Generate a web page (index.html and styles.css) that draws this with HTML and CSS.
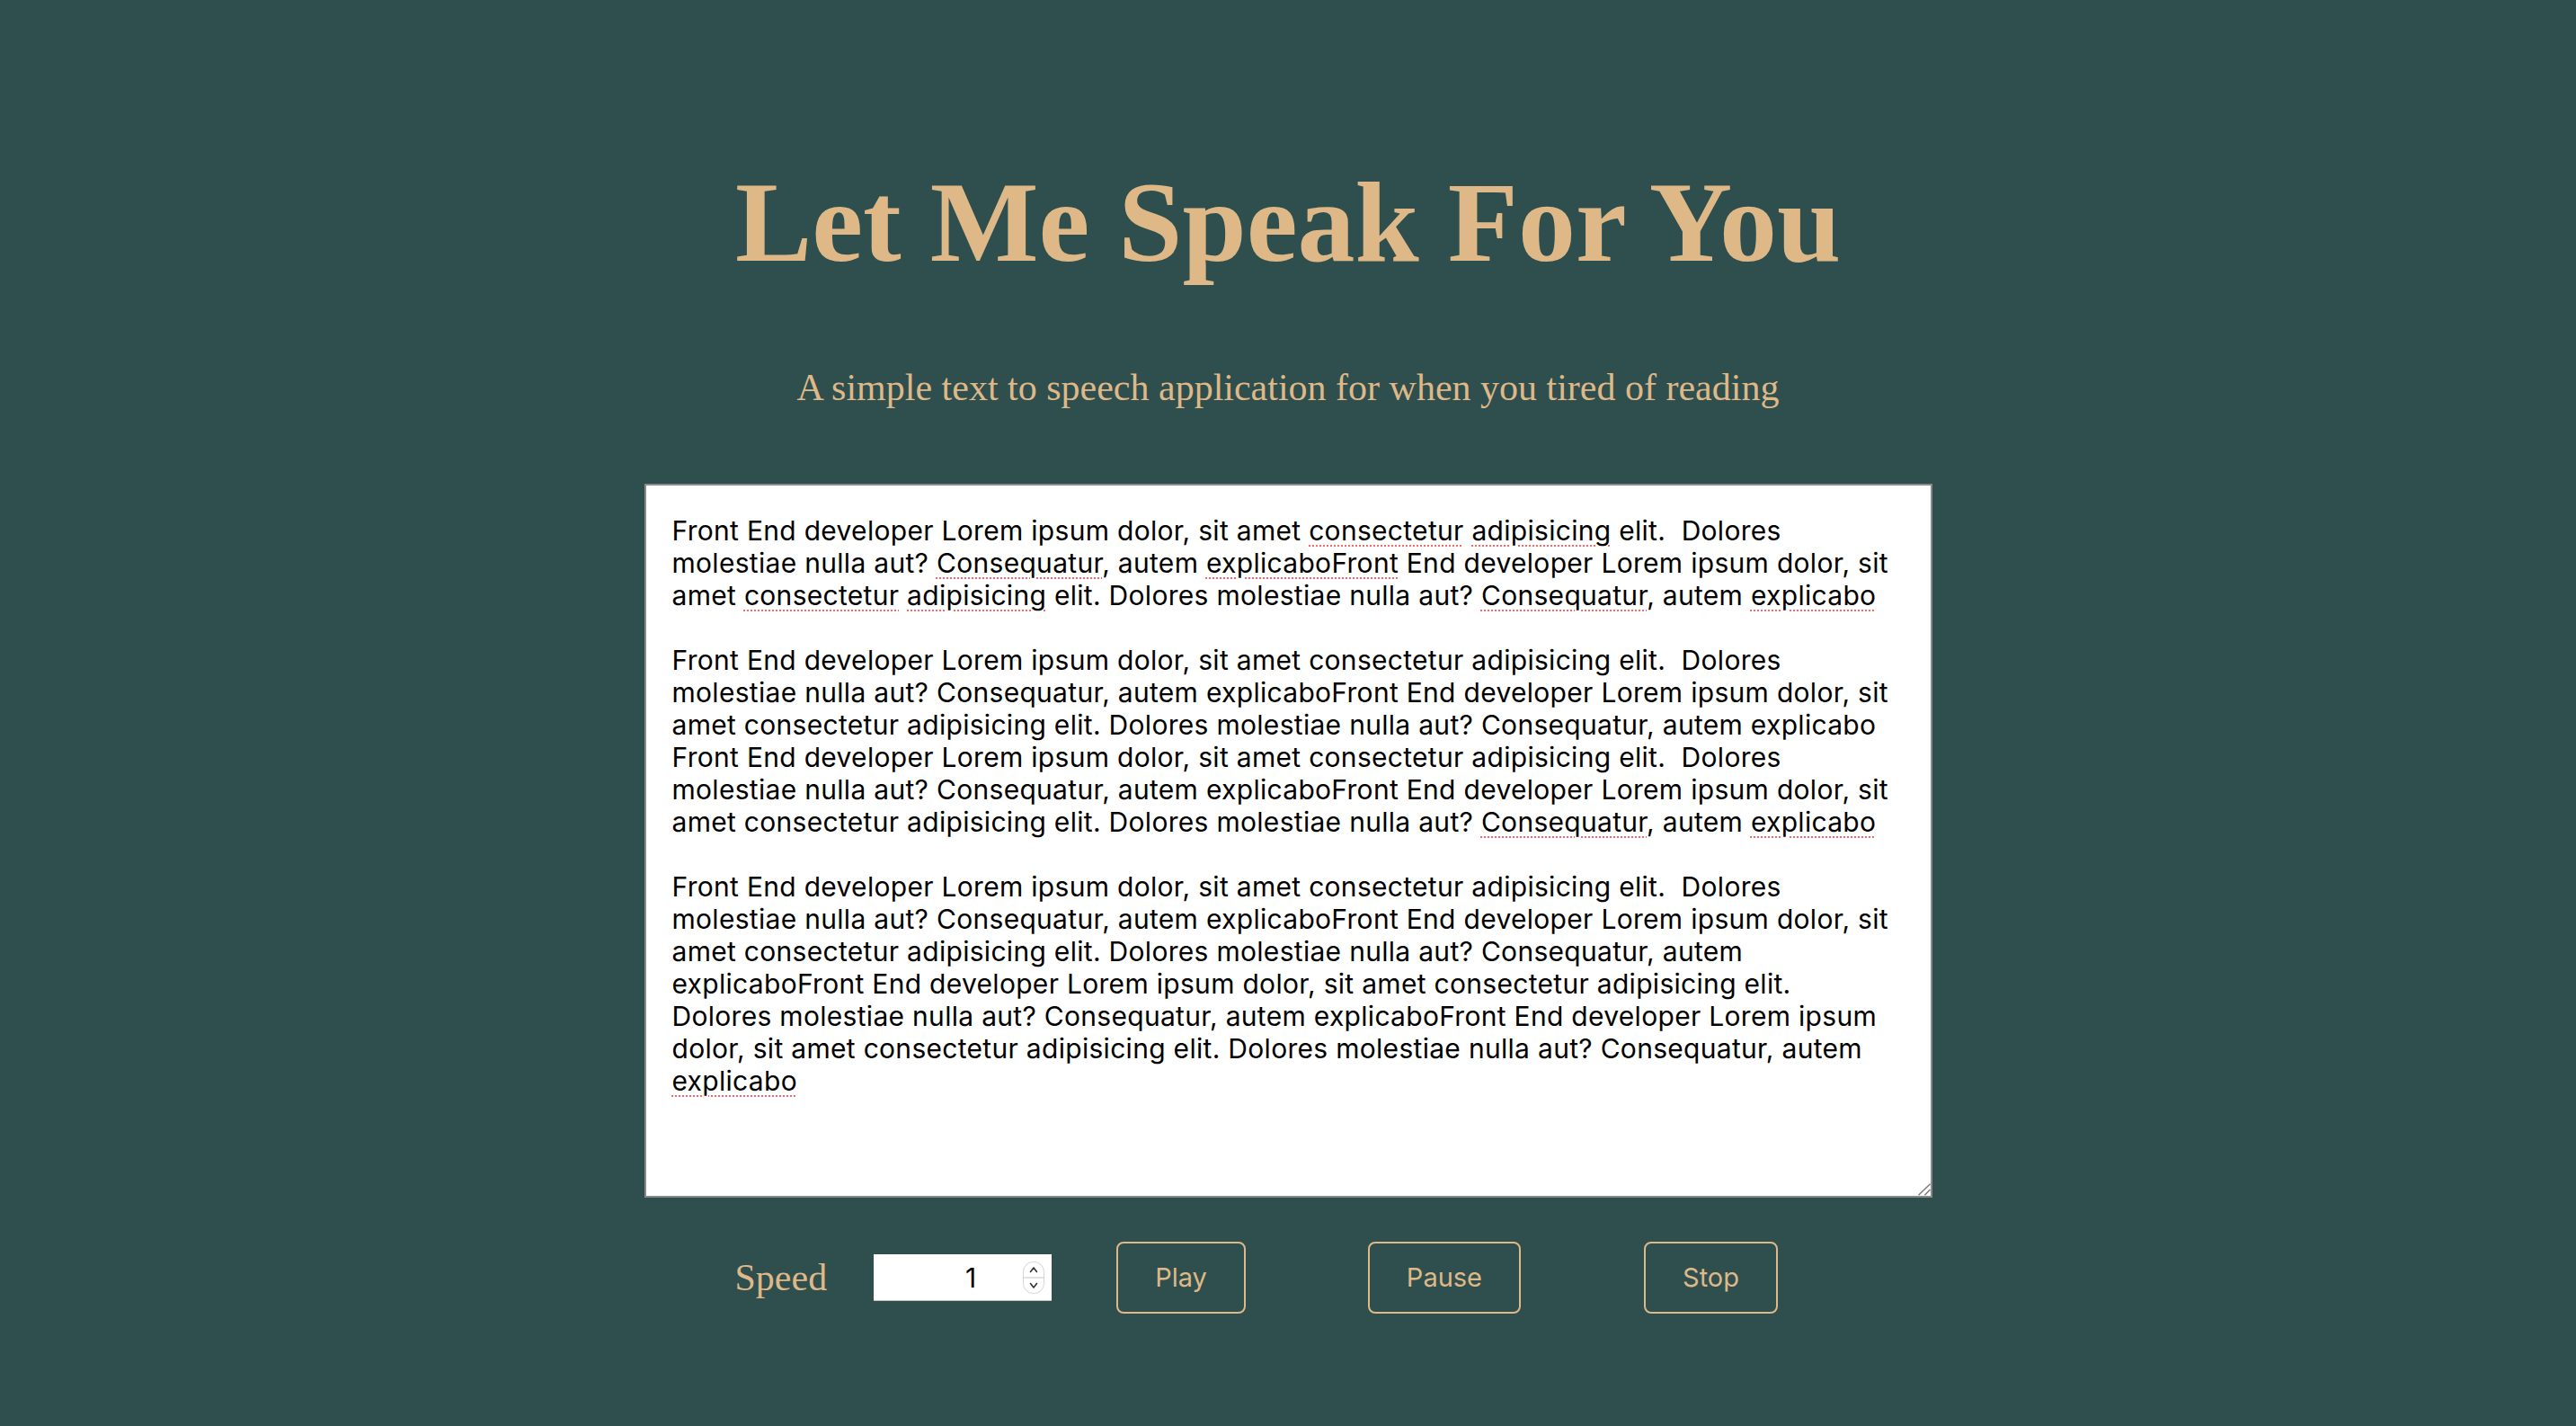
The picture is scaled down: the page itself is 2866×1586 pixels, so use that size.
FILE: index.html
```html
<!DOCTYPE html>
<html lang="en">
<head>
<meta charset="utf-8">
<title>Let Me Speak For You</title>
<link rel="stylesheet" href="styles.css">
</head>
<body>
<main class="app">
  <h1 class="title">Let Me Speak For You</h1>
  <p class="subtitle">A simple text to speech application for when you tired of reading</p>
  <div class="editor-wrap">
<div class="editor" role="textbox" aria-multiline="true">Front End developer Lorem ipsum dolor, sit amet <span class="sp">consectetur</span> <span class="sp">adipisicing</span> elit.  Dolores
molestiae nulla aut? <span class="sp">Consequatur</span>, autem <span class="sp">explicaboFront</span> End developer Lorem ipsum dolor, sit
amet <span class="sp">consectetur</span> <span class="sp">adipisicing</span> elit. Dolores molestiae nulla aut? <span class="sp">Consequatur</span>, autem <span class="sp">explicabo</span>

Front End developer Lorem ipsum dolor, sit amet consectetur adipisicing elit.  Dolores
molestiae nulla aut? Consequatur, autem explicaboFront End developer Lorem ipsum dolor, sit
amet consectetur adipisicing elit. Dolores molestiae nulla aut? Consequatur, autem explicabo
Front End developer Lorem ipsum dolor, sit amet consectetur adipisicing elit.  Dolores
molestiae nulla aut? Consequatur, autem explicaboFront End developer Lorem ipsum dolor, sit
amet consectetur adipisicing elit. Dolores molestiae nulla aut? <span class="sp">Consequatur</span>, autem <span class="sp">explicabo</span>

Front End developer Lorem ipsum dolor, sit amet consectetur adipisicing elit.  Dolores
molestiae nulla aut? Consequatur, autem explicaboFront End developer Lorem ipsum dolor, sit
amet consectetur adipisicing elit. Dolores molestiae nulla aut? Consequatur, autem
explicaboFront End developer Lorem ipsum dolor, sit amet consectetur adipisicing elit.
Dolores molestiae nulla aut? Consequatur, autem explicaboFront End developer Lorem ipsum
dolor, sit amet consectetur adipisicing elit. Dolores molestiae nulla aut? Consequatur, autem
<span class="sp">explicabo</span></div>
    <svg class="grip" viewBox="0 0 14 14" aria-hidden="true"><path d="M0.5 13.2 L13.5 0.7 M7.3 13.2 L13.5 7" stroke="#7a7a7a" stroke-width="1.5" fill="none"/></svg>
  </div>
  <div class="controls">
    <label class="speed-label" for="speed">Speed</label>
    <div class="speed-box">
      <input id="speed" class="speed-input" type="number" value="1" min="0.5" max="2" step="0.5">
      <svg class="spinner" viewBox="0 0 24 36" aria-hidden="true">
        <rect x="0.5" y="0.5" width="23" height="35" rx="11" fill="#fff" stroke="#d4d4d4"/>
        <path d="M1 18 H23" stroke="#d9d9d9" stroke-width="1.5"/>
        <path d="M8.5 11.5 L12 7 L15.5 11.5" stroke="#333" stroke-width="1.6" fill="none" stroke-linecap="round" stroke-linejoin="round"/>
        <path d="M8.5 24.5 L12 29 L15.5 24.5" stroke="#333" stroke-width="1.6" fill="none" stroke-linecap="round" stroke-linejoin="round"/>
      </svg>
    </div>
    <button class="btn btn-play" type="button">Play</button>
    <button class="btn btn-pause" type="button">Pause</button>
    <button class="btn btn-stop" type="button">Stop</button>
  </div>
</main>
</body>
</html>
```
FILE: styles.css
```css
html, body {
  margin: 0;
  padding: 0;
}

body {
  background: #2f4f4f;
  min-height: 100vh;
}

.app {
  display: flex;
  flex-direction: column;
  align-items: center;
}

.title {
  margin: 174px 0 0;
  font-family: "Liberation Serif", "Times New Roman", serif;
  font-weight: 700;
  font-size: 128px;
  line-height: normal;
  color: #deb887;
}

.subtitle {
  margin: 86px 0 0;
  font-family: "Liberation Serif", "Times New Roman", serif;
  font-size: 42px;
  line-height: normal;
  color: #deb887;
}

.editor-wrap {
  position: relative;
  box-sizing: border-box;
  width: 50%;
  height: 794px;
  margin-top: 83px;
  background: #fff;
  border: 2px solid #8a8a8a;
}

.editor {
  box-sizing: border-box;
  height: 100%;
  padding: 32px 30px 32px 29px;
  font-family: "Inter", "Liberation Sans", sans-serif;
  font-size: 30px;
  letter-spacing: 0.3px;
  line-height: 36px;
  color: #000;
  white-space: pre;
  overflow: hidden;
}

.sp {
  text-decoration: underline dotted #f26a6a;
  text-decoration-thickness: 2px;
  text-underline-offset: 5px;
}

.grip {
  position: absolute;
  right: 0;
  bottom: 0;
  width: 14px;
  height: 14px;
}

.controls {
  box-sizing: border-box;
  width: 50%;
  margin-top: 49px;
  padding-left: 101px;
  display: flex;
  align-items: center;
}

.speed-label {
  margin-right: 52px;
  font-family: "Liberation Serif", "Times New Roman", serif;
  font-size: 42px;
  line-height: normal;
  color: #deb887;
}

.speed-box {
  box-sizing: border-box;
  display: flex;
  align-items: center;
  width: 198px;
  height: 52px;
  margin-right: 72px;
  background: #fff;
  border-bottom: 1px solid #c4c4c4;
}

.speed-input {
  flex: 1;
  min-width: 0;
  height: 100%;
  box-sizing: border-box;
  border: 0;
  padding: 0 52px 0 0;
  background: transparent;
  font-family: "Inter", "Liberation Sans", sans-serif;
  font-size: 30px;
  color: #000;
  text-align: right;
  outline: none;
  -moz-appearance: textfield;
  appearance: textfield;
}

.speed-input::-webkit-inner-spin-button,
.speed-input::-webkit-outer-spin-button {
  -webkit-appearance: none;
  margin: 0;
}

.spinner {
  width: 24px;
  height: 36px;
  margin-right: 8px;
  flex: none;
}

.btn {
  box-sizing: border-box;
  padding: 20px 41px;
  background: transparent;
  border: 2px solid #deb887;
  border-radius: 8px;
  color: #deb887;
  font-family: "Inter", "Liberation Sans", sans-serif;
  font-size: 29px;
  line-height: 36px;
  cursor: pointer;
}

.btn-play {
  margin-right: 136px;
}

.btn-pause {
  margin-right: 137px;
}
```
